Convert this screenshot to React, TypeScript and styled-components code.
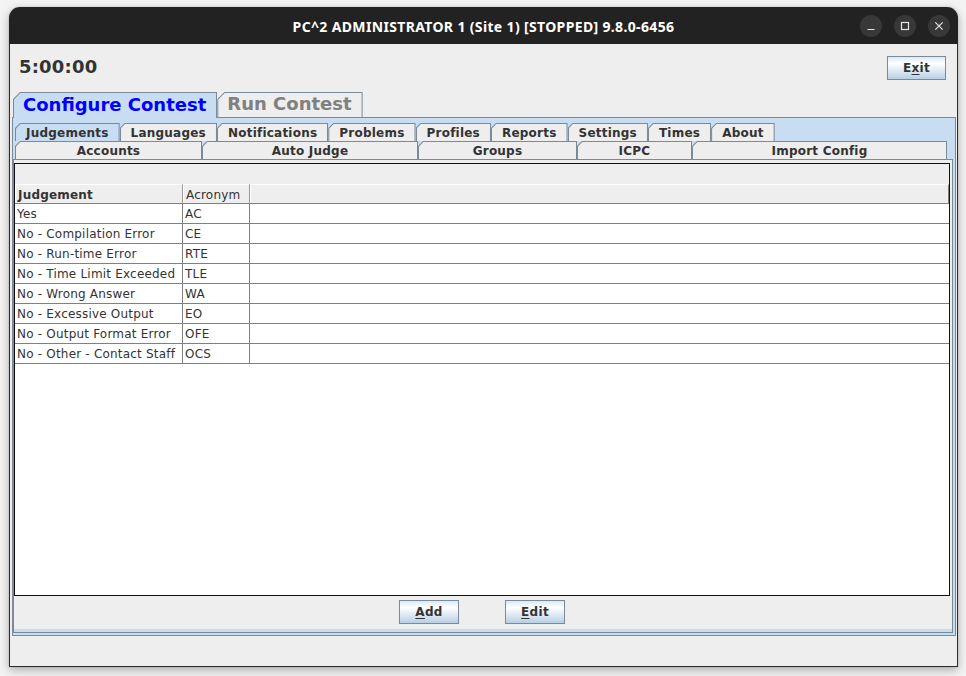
import React from 'react';
import styled, { createGlobalStyle } from 'styled-components';

const GlobalStyle = createGlobalStyle`
  html, body { margin: 0; padding: 0; background: #f3f3f3; }
  body { font-family: "DejaVu Sans", "Liberation Sans", sans-serif; }
  * { box-sizing: border-box; }
`;

const BORDER = '#7a8a99';
const SEL = '#c8ddf2';
const FACE = '#eeeeee';
const TEXT = '#333333';

const Page = styled.div`
  width: 966px;
  height: 676px;
  padding: 7px 0 0 9px;
`;

const Window = styled.div`
  width: 949px;
  height: 660px;
  display: flex;
  flex-direction: column;
  border-radius: 11px 11px 0 0;
  box-shadow: 0 3px 10px rgba(0, 0, 0, 0.3), 0 0 1px rgba(0, 0, 0, 0.4);
  overflow: hidden;
`;

const TitleBar = styled.div`
  height: 37px;
  flex: none;
  background: #222222;
  display: grid;
  grid-template-columns: 1fr auto 1fr;
  align-items: center;
  padding: 0 8px 0 8px;
`;

const Title = styled.div`
  grid-column: 2;
  color: #ffffff;
  font-family: "Noto Sans", "Open Sans", sans-serif;
  font-weight: 700;
  font-size: 14px;
  letter-spacing: 0.35px;
  white-space: nowrap;
  padding-top: 2px;
`;

const Controls = styled.div`
  grid-column: 3;
  justify-self: end;
  display: flex;
  gap: 12px;
`;

const CtlButton = styled.div`
  width: 22px;
  height: 22px;
  border-radius: 50%;
  background: #383838;
  display: flex;
  align-items: center;
  justify-content: center;
`;

const Body = styled.div`
  flex: 1;
  display: flex;
  flex-direction: column;
  background: #eeeeee;
  border: 1px solid #2c2c2c;
  border-top: none;
`;

const TopBar = styled.div`
  height: 48px;
  flex: none;
  display: flex;
  align-items: center;
  justify-content: space-between;
  padding: 0 11px 0 9px;
`;

const Timer = styled.div`
  font-size: 18px;
  font-weight: 700;
  color: ${TEXT};
  letter-spacing: 0.2px;
  padding-bottom: 3px;
`;

const JButton = styled.button<{ $w: number }>`
  width: ${p => p.$w}px;
  height: 24px;
  border: 1px solid ${BORDER};
  background: linear-gradient(to bottom, #dde8f3 0%, #ffffff 30%, #b8cfe5 100%);
  font-family: "DejaVu Sans", sans-serif;
  font-size: 12px;
  font-weight: 700;
  letter-spacing: 0.3px;
  color: ${TEXT};
  padding: 0;
  border-radius: 0;
  display: flex;
  align-items: center;
  justify-content: center;
  u { text-decoration: underline; text-underline-offset: 2px; text-decoration-thickness: 1px; }
`;

const MainTabStrip = styled.div`
  height: 25px;
  flex: none;
  display: flex;
  align-items: flex-end;
  padding-left: 3px;
`;

const TabOuter = styled.div<{ $cut: number; $sel?: boolean; $h: number; $w?: number }>`
  height: ${p => p.$h}px;
  ${p => (p.$w ? `width: ${p.$w}px; flex: none;` : '')}
  background: ${BORDER};
  padding: 1px 1px 0 1px;
  clip-path: polygon(${p => p.$cut}px 0, 100% 0, 100% 100%, 0 100%, 0 ${p => p.$cut}px);
  position: relative;
  z-index: ${p => (p.$sel ? 2 : 1)};
`;

const TabFace = styled.div<{ $cut: number; $sel?: boolean; $big?: boolean }>`
  height: 100%;
  background: ${p => (p.$sel ? SEL : FACE)};
  clip-path: polygon(${p => p.$cut - 0.6}px 0, 100% 0, 100% 100%, 0 100%, 0 ${p => p.$cut - 0.6}px);
  display: flex;
  align-items: center;
  justify-content: center;
  white-space: nowrap;
  font-weight: 700;
  font-size: ${p => (p.$big ? 18 : 12)}px;
  letter-spacing: ${p => (p.$big ? 0 : 0.22)}px;
  padding: ${p => (p.$big ? '0 10px 3px 9px' : '0 10px')};
  color: ${p => (p.$big ? (p.$sel ? '#0000ff' : '#808080') : TEXT)};
`;

const MainPanel = styled.div`
  flex: 1;
  display: flex;
  flex-direction: column;
  margin: 0 1px 0 2px;
  border: 1px solid ${BORDER};
  background: ${SEL};
  padding: 5px 2px 2px 0;
`;

const SubTabRow = styled.div`
  height: 18px;
  flex: none;
  display: flex;
  padding-left: 2px;
`;

const SubPanel = styled.div`
  flex: 1;
  display: flex;
  flex-direction: column;
  border: 1px solid ${BORDER};
  background: ${SEL};
  padding-bottom: 3px;
`;

const SubContent = styled.div`
  flex: 1;
  display: flex;
  flex-direction: column;
  background: #eeeeee;
  padding: 3px 2px 0 0;
`;

const TableScroll = styled.div`
  flex: 1;
  border: 1px solid #111111;
  display: flex;
  flex-direction: column;
  background: #ffffff;
`;

const TopGap = styled.div`
  height: 20px;
  flex: none;
  background: #eeeeee;
`;

const COLS = '168px 67px 1fr';

const HeaderRow = styled.div`
  height: 20px;
  flex: none;
  display: grid;
  grid-template-columns: ${COLS};
  background: #eeeeee;
  border-bottom: 1px solid #808080;
`;

const HeaderCell = styled.div<{ $bold?: boolean; $last?: boolean }>`
  border-top: 1px solid #ffffff;
  border-left: 1px solid #ffffff;
  border-right: 1px solid ${p => (p.$last ? '#808080' : '#999999')};
  display: flex;
  align-items: center;
  padding: 1px 0 0 2px;
  font-size: 12px;
  letter-spacing: 0.2px;
  font-weight: ${p => (p.$bold ? 700 : 400)};
  color: ${TEXT};
  white-space: nowrap;
`;

const Row = styled.div`
  height: 20px;
  flex: none;
  display: grid;
  grid-template-columns: ${COLS};
  border-bottom: 1px solid #808080;
`;

const Cell = styled.div<{ $line?: boolean }>`
  border-right: ${p => (p.$line ? '1px solid #808080' : 'none')};
  display: flex;
  align-items: center;
  padding-left: 2px;
  font-size: 12px;
  letter-spacing: 0.2px;
  color: ${TEXT};
  white-space: nowrap;
`;

const ButtonRow = styled.div`
  height: 33px;
  flex: none;
  display: flex;
  justify-content: center;
  align-items: flex-start;
  padding-top: 4px;
  gap: 46px;
`;

const Status = styled.div`
  height: 30px;
  flex: none;
`;

const judgements: [string, string][] = [
  ['Yes', 'AC'],
  ['No - Compilation Error', 'CE'],
  ['No - Run-time Error', 'RTE'],
  ['No - Time Limit Exceeded', 'TLE'],
  ['No - Wrong Answer', 'WA'],
  ['No - Excessive Output', 'EO'],
  ['No - Output Format Error', 'OFE'],
  ['No - Other - Contact Staff', 'OCS'],
];

const row1 = ['Judgements', 'Languages', 'Notifications', 'Problems', 'Profiles', 'Reports', 'Settings', 'Times', 'About'];
const row2: [string, number][] = [
  ['Accounts', 187],
  ['Auto Judge', 216],
  ['Groups', 159],
  ['ICPC', 115],
  ['Import Config', 255],
];

function Tab({ label, sel, big, h, w, cut }: { label: string; sel?: boolean; big?: boolean; h: number; w?: number; cut: number }) {
  return (
    <TabOuter $cut={cut} $sel={sel} $h={h} $w={w} style={sel && big ? { marginBottom: -1, paddingBottom: 0 } : undefined}>
      <TabFace $cut={cut} $sel={sel} $big={big}>{label}</TabFace>
    </TabOuter>
  );
}

export default function App() {
  return (
    <Page>
      <GlobalStyle />
      <Window>
        <TitleBar>
          <Title>PC^2 ADMINISTRATOR 1 (Site 1) [STOPPED] 9.8.0-6456</Title>
          <Controls>
            <CtlButton>
              <svg width="10" height="10" viewBox="0 0 10 10">
                <line x1="1.5" y1="8.5" x2="8.5" y2="8.5" stroke="#e6e6e6" strokeWidth="1.2" />
              </svg>
            </CtlButton>
            <CtlButton>
              <svg width="10" height="10" viewBox="0 0 10 10">
                <rect x="1.5" y="1.5" width="7" height="7" fill="none" stroke="#e6e6e6" strokeWidth="1.2" />
              </svg>
            </CtlButton>
            <CtlButton>
              <svg width="10" height="10" viewBox="0 0 10 10">
                <path d="M1.3 1.3 L8.7 8.7 M8.7 1.3 L1.3 8.7" stroke="#e6e6e6" strokeWidth="1.2" />
              </svg>
            </CtlButton>
          </Controls>
        </TitleBar>
        <Body>
          <TopBar>
            <Timer>5:00:00</Timer>
            <JButton $w={59}>E<u>x</u>it</JButton>
          </TopBar>
          <MainTabStrip>
            <Tab label="Configure Contest" sel big h={26} cut={7} />
            <Tab label="Run Contest" big h={25} cut={7} />
          </MainTabStrip>
          <MainPanel>
            <SubTabRow>
              {row1.map((t, i) => (
                <Tab key={t} label={t} sel={i === 0} h={18} cut={5} />
              ))}
            </SubTabRow>
            <SubTabRow>
              {row2.map(([t, w]) => (
                <Tab key={t} label={t} h={18} w={w} cut={5} />
              ))}
            </SubTabRow>
            <SubPanel>
              <SubContent>
                <TableScroll>
                  <TopGap />
                  <HeaderRow>
                    <HeaderCell $bold>Judgement</HeaderCell>
                    <HeaderCell>Acronym</HeaderCell>
                    <HeaderCell $last />
                  </HeaderRow>
                  {judgements.map(([name, acr]) => (
                    <Row key={acr}>
                      <Cell $line>{name}</Cell>
                      <Cell $line>{acr}</Cell>
                      <Cell />
                    </Row>
                  ))}
                </TableScroll>
                <ButtonRow>
                  <JButton $w={60}><u>A</u>dd</JButton>
                  <JButton $w={60}><u>E</u>dit</JButton>
                </ButtonRow>
              </SubContent>
            </SubPanel>
          </MainPanel>
          <Status />
        </Body>
      </Window>
    </Page>
  );
}
